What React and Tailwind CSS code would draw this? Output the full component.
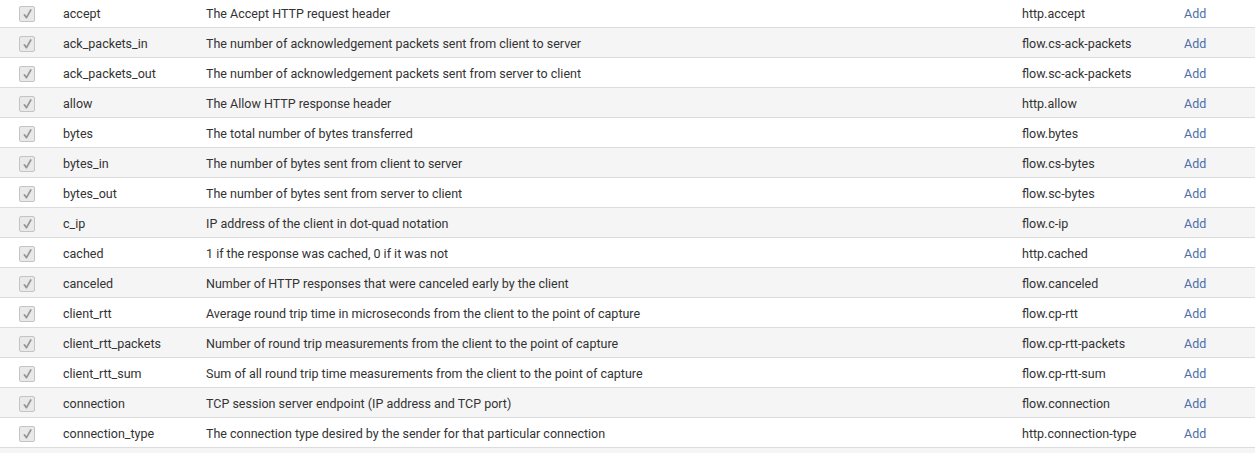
const fields = [
  ["accept", "The Accept HTTP request header", "http.accept"],
  ["ack_packets_in", "The number of acknowledgement packets sent from client to server", "flow.cs-ack-packets"],
  ["ack_packets_out", "The number of acknowledgement packets sent from server to client", "flow.sc-ack-packets"],
  ["allow", "The Allow HTTP response header", "http.allow"],
  ["bytes", "The total number of bytes transferred", "flow.bytes"],
  ["bytes_in", "The number of bytes sent from client to server", "flow.cs-bytes"],
  ["bytes_out", "The number of bytes sent from server to client", "flow.sc-bytes"],
  ["c_ip", "IP address of the client in dot-quad notation", "flow.c-ip"],
  ["cached", "1 if the response was cached, 0 if it was not", "http.cached"],
  ["canceled", "Number of HTTP responses that were canceled early by the client", "flow.canceled"],
  ["client_rtt", "Average round trip time in microseconds from the client to the point of capture", "flow.cp-rtt"],
  ["client_rtt_packets", "Number of round trip measurements from the client to the point of capture", "flow.cp-rtt-packets"],
  ["client_rtt_sum", "Sum of all round trip time measurements from the client to the point of capture", "flow.cp-rtt-sum"],
  ["connection", "TCP session server endpoint (IP address and TCP port)", "flow.connection"],
  ["connection_type", "The connection type desired by the sender for that particular connection", "http.connection-type"],
];

/* ================= CHECKBOX ================= */

function Check() {
  return (
    <span className="flex items-center justify-center w-[16px] h-[16px] rounded-[2px] border border-[#c4c4c4] bg-[#e9e9e9]">
      <svg width="11" height="12" viewBox="0 0 11 12" fill="none">
        <path d="M2.3 6.8 L4.5 9.6 L8.8 2" stroke="#959595" strokeWidth="1.7" strokeLinecap="round" strokeLinejoin="round" />
      </svg>
    </span>
  );
}

/* ================= TABLE ================= */

export default function App() {
  return (
    <div className="w-[1255px] h-[453px] overflow-hidden bg-white font-['Roboto',sans-serif] text-[12.5px] text-[#333]">
      <div className="-mt-[2px]">
        {fields.map(([name, desc, field], i) => (
          <div
            key={name}
            className={`grid grid-cols-[63px_143px_816px_162px_1fr] items-center h-[30px] pt-[3px] border-b border-[#dcdcdc] ${
              i % 2 ? "bg-[#f5f5f5]" : "bg-white"
            }`}
          >
            <div className="pl-[19px] -mt-[1px]">
              <Check />
            </div>
            <div>{name}</div>
            <div>{desc}</div>
            <div>{field}</div>
            <div className="text-[#4d6fa8]">Add</div>
          </div>
        ))}
        {/* next row, only its top shows */}
        <div className="h-[30px] bg-[#f5f5f5]" />
      </div>
    </div>
  );
}
